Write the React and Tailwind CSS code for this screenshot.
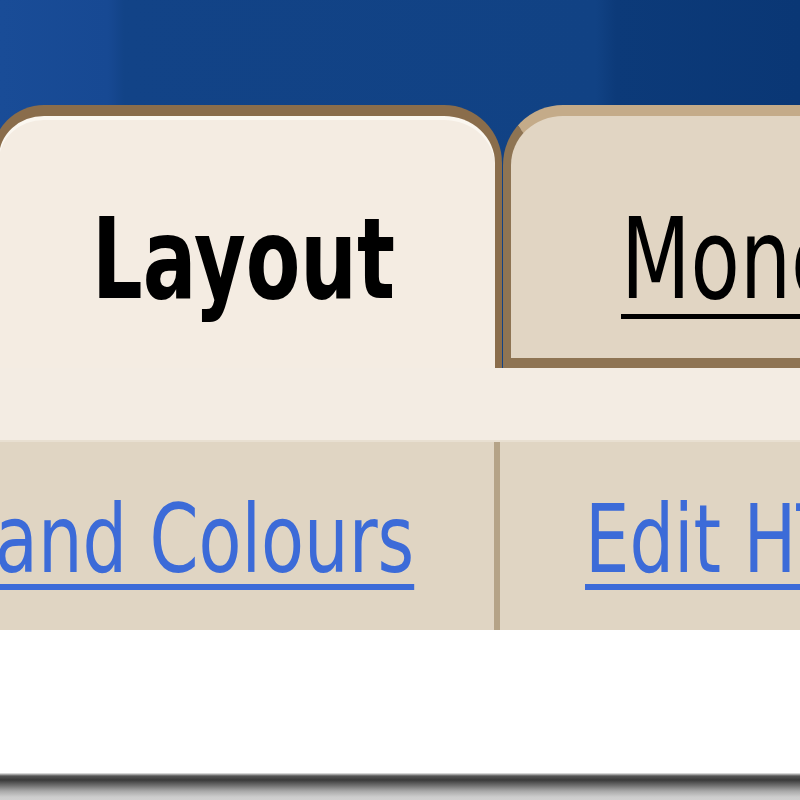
export default function App() {
  return (
    <div className="w-[800px] h-[800px] overflow-hidden bg-white flex flex-col font-['DejaVu_Sans',sans-serif]">
      {/* blue header with tabs */}
      <div className="h-[368px] shrink-0 flex pt-[105px] bg-[linear-gradient(90deg,#194c97_0px,#174993_108px,#124387_124px,#114284_596px,#0c3a79_616px,#0a3775_800px)]">
        <div className="-ml-2 w-[510px] h-full shrink-0 rounded-tl-[52px] rounded-tr-[58px] border-t-[11px] border-x-[7px] border-b-0 border-[#8a6d4b] bg-[#f4ece2] shadow-[inset_0_4px_0_#fbf7f0] pl-[93px] pt-[87px]">
          <span className="inline-block origin-left scale-x-[0.71] text-[112px] leading-none font-bold text-black whitespace-nowrap">
            Layout
          </span>
        </div>
        <div className="ml-[1px] w-[420px] h-full shrink-0 rounded-tl-[60px] border-t-[11px] border-l-[8px] border-b-[10px] border-[#8e7453] border-t-[#c4ab89] bg-[#e1d5c3] pl-[110px] pt-[87px]">
          <span className="inline-block origin-left scale-x-[0.72] text-[112px] leading-none text-black whitespace-nowrap underline decoration-[5px] underline-offset-[16px]">
            Monetise
          </span>
        </div>
      </div>

      {/* light strip under the tabs */}
      <div className="h-[72px] shrink-0 bg-[#f3ece3]" />

      {/* sub navigation */}
      <div className="h-[190px] shrink-0 flex bg-[#e0d5c3] border-t-2 border-[#e8dfd1]">
        <div className="w-[494px] shrink-0 flex justify-end pr-[80px] pt-[50px]">
          <span className="inline-block origin-right scale-x-[0.74] text-[95px] leading-none text-[#3c6bd8] whitespace-nowrap underline decoration-[6px] underline-offset-[12px]">
            Fonts and Colours
          </span>
        </div>
        <div className="w-[6px] shrink-0 bg-[#b5a387]" />
        <div className="flex-1 pl-[85px] pt-[50px]">
          <span className="inline-block origin-left scale-x-[0.74] text-[95px] leading-none text-[#3c6bd8] whitespace-nowrap underline decoration-[6px] underline-offset-[12px]">
            Edit HTML
          </span>
        </div>
      </div>

      {/* page body */}
      <div className="flex-1 bg-white" />
      <div className="h-[27px] shrink-0 bg-[linear-gradient(180deg,#f0f0f0_0px,#555555_3px,#3a3a3a_7px,#6a6a6a_12px,#a8a8a8_18px,#cdcdcd_24px,#d0d0d0_27px)]" />
    </div>
  );
}
